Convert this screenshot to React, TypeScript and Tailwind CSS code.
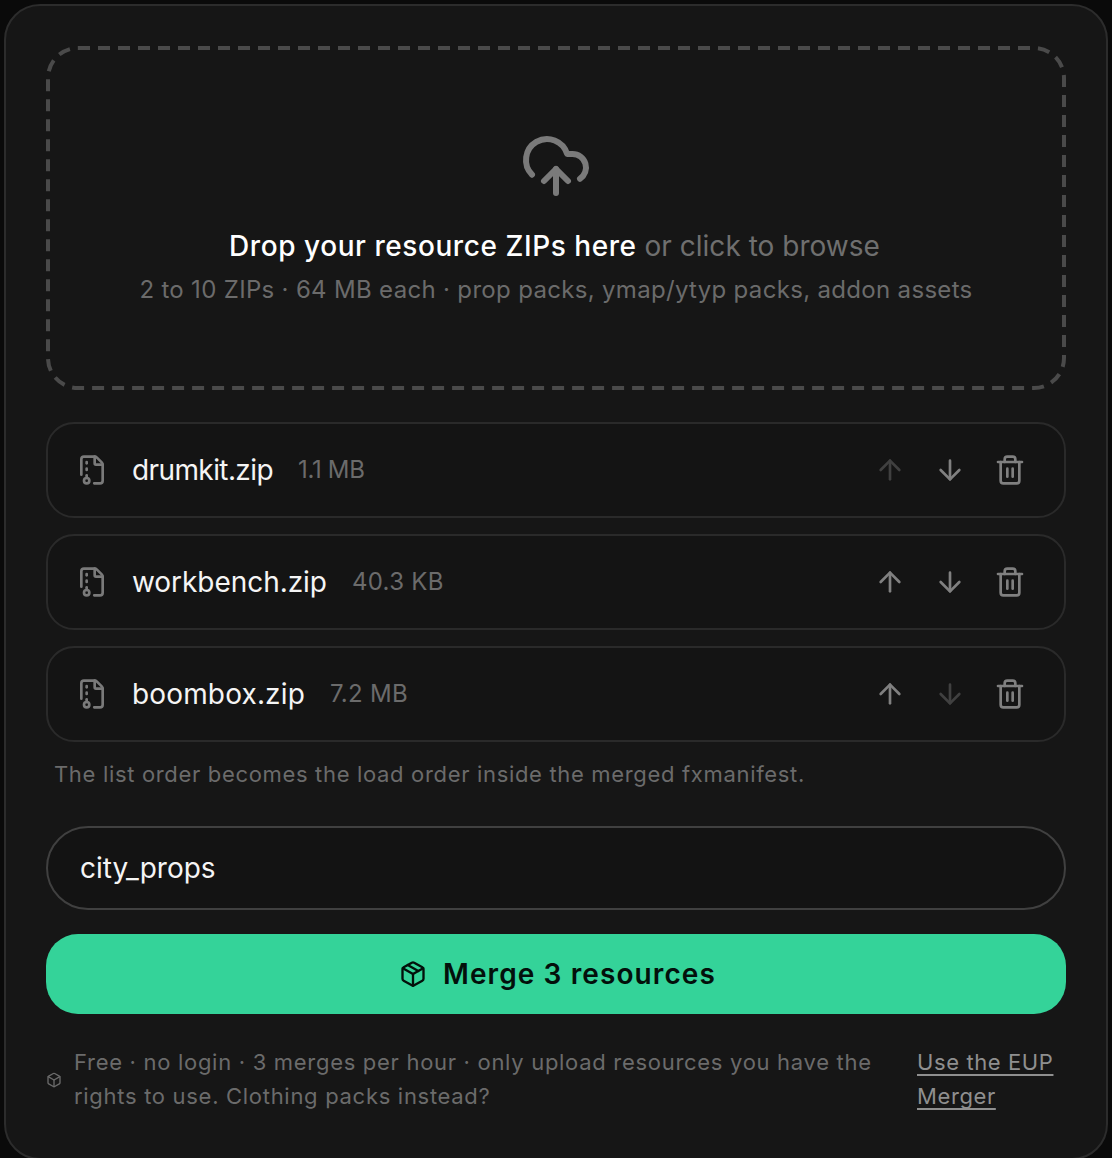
import { ArrowDown, ArrowUp, Box, CloudUpload, FileArchive, Package, Trash2 } from "lucide-react";

const files = [
  { name: "drumkit.zip", size: "1.1 MB", up: false, down: true, nameClass: "tracking-[-0.6px]", sizeClass: "tracking-[-0.3px]" },
  { name: "workbench.zip", size: "40.3 KB", up: true, down: true, nameClass: "tracking-[-0.05px]", sizeClass: "tracking-[0.3px]" },
  { name: "boombox.zip", size: "7.2 MB", up: true, down: false, nameClass: "tracking-[0.15px]", sizeClass: "tracking-[0.3px]" },
];

export default function App() {
  return (
    <div className="min-h-[1158px] bg-[#0a0a0a] px-1 pt-1 font-['Inter',sans-serif]">
      <div className="flex h-[1156px] flex-col rounded-[36px] border-2 border-[#2c2c2c] bg-[#161616] px-10 pt-10">
        <div className="relative flex h-[344px] flex-col items-center pt-[84px]">
          <svg className="absolute inset-0 h-full w-full" fill="none">
            <rect x="2" y="2" width="1016" height="340" rx="30" stroke="#4a4a4a" strokeWidth="4" strokeDasharray="12 8" />
          </svg>
          <CloudUpload className="h-[72px] w-[72px] text-[#7a7a7a]" strokeWidth={2} />
          <p className="mr-[3px] mt-[24px] text-[28px] leading-[40px] tracking-[0.02px] text-[#6f6f6f]">
            <span className="font-medium tracking-[0.56px] text-white">Drop your resource ZIPs here</span> or click to browse
          </p>
          <p className="mt-[6px] text-[24px] leading-[36px] tracking-[0.32px] text-[#6b6b6b]">
            2 to 10 ZIPs · 64 MB each · prop packs, ymap/ytyp packs, addon assets
          </p>
        </div>

        <div className="mt-8 flex flex-col gap-4">
          {files.map((f) => (
            <div key={f.name} className="flex h-24 items-center rounded-[28px] border-2 border-[#2a2a2a] bg-[#141414] pl-[28px] pr-[38px]">
              <FileArchive className="h-8 w-8 text-[#7a7a7a]" strokeWidth={2} />
              <span className={`ml-[24px] text-[28px] text-[#f5f5f5] ${f.nameClass}`}>{f.name}</span>
              <span className={`ml-[25px] text-[24px] text-[#6b6b6b] ${f.sizeClass}`}>{f.size}</span>
              <div className="ml-auto flex items-center gap-7">
                <ArrowUp className={`h-8 w-8 ${f.up ? "text-[#808080]" : "text-[#404040]"}`} strokeWidth={2} />
                <ArrowDown className={`h-8 w-8 ${f.down ? "text-[#808080]" : "text-[#404040]"}`} strokeWidth={2} />
                <Trash2 className="h-8 w-8 text-[#808080]" strokeWidth={2} />
              </div>
            </div>
          ))}
        </div>

        <p className="mt-[18px] pl-2 text-[22px] leading-[28px] tracking-[0.67px] text-[#6b6b6b]">
          The list order becomes the load order inside the merged fxmanifest.
        </p>

        <div className="mt-[38px] flex h-[84px] items-center rounded-[42px] border-2 border-[#404040] bg-[#131313] px-8 text-[28px] tracking-[0px] text-[#f5f5f5]">
          city_props
        </div>

        <button className="mt-6 flex h-20 items-center justify-center gap-4 rounded-[32px] bg-[#34d399] pl-[3px] text-[28px] font-semibold tracking-[1.1px] text-[#03100b]">
          <Package className="h-7 w-7" strokeWidth={2} />
          Merge 3 resources
        </button>

        <div className="mt-[31px] flex items-center text-[22px] leading-[34px] tracking-[0.7px] text-[#6b6b6b]">
          <Box className="mr-[12px] mt-[2px] h-4 w-4 shrink-0" strokeWidth={2} />
          <p className="w-[812px] shrink-0">Free · no login · 3 merges per hour · only upload resources you have the rights to use. Clothing packs instead?</p>
          <a className="ml-[31px] w-[149px] tracking-[0.6px] text-[#8f8f8f] underline decoration-2 underline-offset-[4px] [text-decoration-skip-ink:none]">Use the EUP Merger</a>
        </div>
      </div>
    </div>
  );
}
